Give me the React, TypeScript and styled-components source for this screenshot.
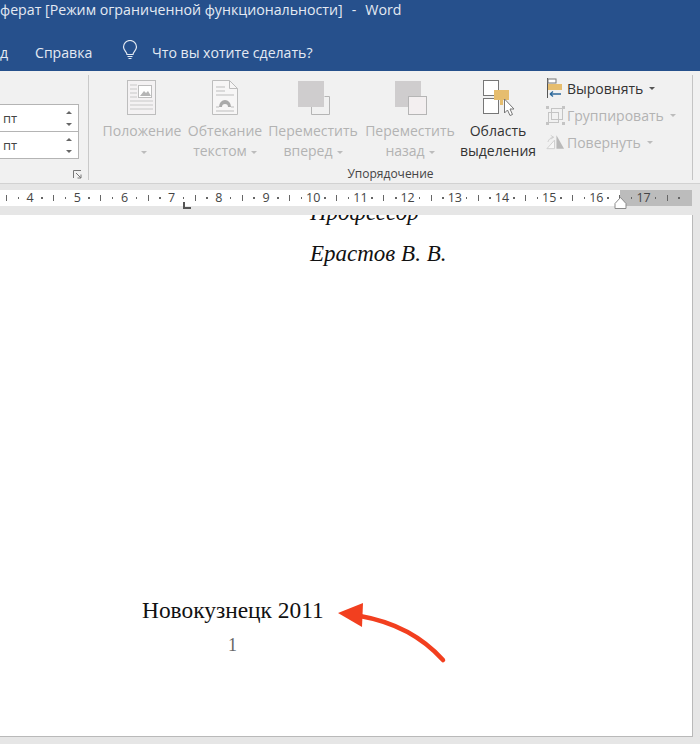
import React from 'react';
import styled, { createGlobalStyle } from 'styled-components';

const UI_FONT = `'Open Sans', 'Noto Sans', sans-serif`;

const GlobalStyle = createGlobalStyle`
  html, body {
    margin: 0;
    padding: 0;
    background: #e6e6e6;
  }
  body {
    width: 700px;
    height: 744px;
    overflow: hidden;
  }
`;

const Window = styled.div`
  width: 700px;
  height: 744px;
  display: flex;
  flex-direction: column;
  font-family: ${UI_FONT};
  overflow: hidden;
`;

const TitleBar = styled.header`
  height: 71px;
  flex: 0 0 auto;
  background: #26508c;
  color: #e4eaf3;
  display: flex;
  flex-direction: column;
`;

const TitleText = styled.div`
  height: 20px;
  line-height: 20px;
  font-size: 14.2px;
  white-space: nowrap;
`;

const TitleDash = styled.span`
  margin: 0 9px;
`;

const MenuRow = styled.nav`
  margin-top: 21px;
  height: 22px;
  display: flex;
  align-items: center;
  font-size: 14.1px;
  white-space: nowrap;
`;

const MenuItem = styled.span<{ $w: number }>`
  width: ${(p) => p.$w}px;
  flex: 0 0 auto;
`;

const Ribbon = styled.section`
  height: 113px;
  flex: 0 0 auto;
  background: #f1f1f1;
  border-bottom: 1px solid #d2d2d2;
  display: flex;
  box-sizing: border-box;
`;

const SizeGroup = styled.div`
  width: 89px;
  flex: 0 0 auto;
  box-sizing: border-box;
  border-right: 1px solid #c9c9c9;
  margin: 4px 0 3px;
  display: flex;
  flex-direction: column;
  padding-top: 30px;
  position: relative;
`;

const Spinner = styled.div`
  width: 79px;
  height: 28px;
  margin-top: -1px;
  box-sizing: border-box;
  background: #fff;
  border: 1px solid #b4b4b4;
  border-left: none;
  display: flex;
  align-items: center;
  justify-content: space-between;
  padding: 0 6px 0 3px;
  font-size: 13px;
  color: #444;
`;

const SpinArrows = styled.div`
  display: flex;
  flex-direction: column;
  gap: 9px;
`;

const SpinArrow = styled.i<{ $down?: boolean }>`
  display: block;
  width: 0;
  height: 0;
  border-left: 3px solid transparent;
  border-right: 3px solid transparent;
  ${(p) => (p.$down ? 'border-top: 3px solid #666;' : 'border-bottom: 3px solid #666;')}
`;

const Launcher = styled.svg`
  position: absolute;
  left: 73px;
  top: 95px;
`;

const ArrangeGroup = styled.div`
  width: 604px;
  flex: 0 0 auto;
  box-sizing: border-box;
  border-right: 1px solid #c4c4c4;
  margin: 4px 0 3px;
  display: flex;
  flex-direction: column;
`;

const ArrangeBody = styled.div`
  flex: 0 0 93px;
  display: flex;
  padding-left: 8px;
`;

const GroupLabel = styled.div`
  text-align: center;
  font-size: 12px;
  line-height: 12px;
  color: #444;
`;

const BigButton = styled.div<{ $w: number; $off?: boolean }>`
  width: ${(p) => p.$w}px;
  flex: 0 0 auto;
  display: flex;
  flex-direction: column;
  align-items: center;
  padding-top: 5px;
  font-size: 14px;
  line-height: 20px;
  color: ${(p) => (p.$off ? '#b3b3b3' : '#333')};
  white-space: nowrap;
`;

const BigIcon = styled.svg`
  display: block;
  margin-bottom: 5px;
`;

const Caret = styled.i<{ $dark?: boolean }>`
  display: inline-block;
  width: 0;
  height: 0;
  margin-left: 4px;
  vertical-align: middle;
  border-left: 3.5px solid transparent;
  border-right: 3.5px solid transparent;
  border-top: 3.5px solid ${(p) => (p.$dark ? '#555' : '#bcbcbc')};
`;

const SmallColumn = styled.div`
  margin-left: 7px;
  padding-top: 2px;
  display: flex;
  flex-direction: column;
  gap: 5px;
`;

const SmallButton = styled.div<{ $off?: boolean }>`
  height: 22px;
  display: flex;
  align-items: center;
  gap: 2px;
  font-size: 14px;
  color: ${(p) => (p.$off ? '#b3b3b3' : '#333')};
  white-space: nowrap;
`;

const RulerBand = styled.div`
  height: 31px;
  flex: 0 0 auto;
  box-sizing: border-box;
  padding-top: 6px;
  background: #e6e6e6;
`;

const Ruler = styled.div`
  width: 692px;
  height: 16px;
  box-sizing: border-box;
  padding-left: 0.6px;
  position: relative;
  display: flex;
  background: linear-gradient(to right, #fff 620px, #bcbcbc 620px);
`;

const RulerCell = styled.div`
  width: 11.81px;
  flex: 0 0 auto;
  display: flex;
  align-items: center;
  justify-content: center;
  font-size: 12.5px;
  line-height: 16px;
  color: #444;
`;

const RulerTick = styled.i`
  display: block;
  width: 1px;
  height: 6px;
  background: #666;
`;

const RulerDot = styled.i`
  display: block;
  width: 1.5px;
  height: 1.5px;
  background: #666;
`;

const TabStop = styled.i`
  position: absolute;
  left: 183px;
  top: 12px;
  width: 6px;
  height: 5px;
  border-left: 2px solid #555;
  border-bottom: 2px solid #555;
`;

const IndentMarker = styled.svg`
  position: absolute;
  left: 614px;
  top: 7px;
`;

const DocArea = styled.main`
  flex: 1;
  min-height: 0;
  display: flex;
  padding: 0 7px 7px 0;
  background: #e6e6e6;
`;

const Page = styled.article`
  flex: 1;
  position: relative;
  overflow: hidden;
  background: #fff;
  border-right: 1px solid #b9b9b9;
  border-bottom: 1px solid #b9b9b9;
  font-family: 'Liberation Serif', 'Times New Roman', serif;
  color: #111;
`;

const SignLine = styled.p<{ $top?: number }>`
  margin: ${(p) => p.$top ?? 0}px 0 0 310px;
  font-size: 23px;
  line-height: 24px;
  font-style: italic;
  white-space: nowrap;
`;

const City = styled.p`
  margin: 332px 0 0 142px;
  font-size: 23.4px;
  line-height: 24px;
  white-space: nowrap;
`;

const PageNumber = styled.div`
  margin: 13px 0 0 228px;
  font-size: 18px;
  line-height: 20px;
  color: #666;
`;

const Arrow = styled.svg`
  position: absolute;
  left: 330px;
  top: 380px;
`;

function PositionIcon() {
  return (
    <BigIcon width="30" height="36" viewBox="0 0 30 36" fill="none">
      <rect x="0.5" y="0.5" width="28" height="34" fill="#f4f2f3" stroke="#bdbdbd" />
      <rect x="11.5" y="5.5" width="13" height="12" fill="#fff" stroke="#bdbdbd" />
      <path d="M13 16l4-5 2 2 2-2 3 5z" fill="#b5b5b5" />
      <path d="M3 5h7M3 9h7M3 13h7M3 17h7M3 21h23M3 25h23M3 29h23" stroke="#c8c8c8" />
    </BigIcon>
  );
}

function WrapIcon() {
  return (
    <BigIcon width="30" height="36" viewBox="0 0 30 36" fill="none">
      <path d="M2.5.5h17l8 8v26h-25z" fill="#f7f6f6" stroke="#bdbdbd" />
      <path d="M19.5.5v8h8" stroke="#bdbdbd" />
      <path d="M6 7h9M6 11h9M6 15h18M6 31h18" stroke="#bdbdbd" />
      <path d="M6 27h3M21 27h3" stroke="#bdbdbd" />
      <path d="M9 27a6 7 0 0 1 12 0h-3a3 3 0 0 0-6 0z" fill="#a9a9a9" />
    </BigIcon>
  );
}

function StackIcon({ front }: { front: boolean }) {
  return (
    <BigIcon width="33" height="36" viewBox="0 0 33 36" fill="none">
      <rect x="1" y="1" width="26" height="26" fill="#cfcdce" />
      {front ? (
        <path d="M27.5 16.5h5v18h-18v-7.5" stroke="#b5b5b5" />
      ) : (
        <rect x="14.5" y="16.5" width="18" height="18" fill="#f3eff0" stroke="#b5b5b5" />
      )}
    </BigIcon>
  );
}

function SelectionIcon() {
  return (
    <BigIcon width="34" height="36" viewBox="0 0 34 36" fill="none">
      <rect x="2.5" y="0.5" width="15" height="15" fill="#fff" stroke="#777" />
      <rect x="2.5" y="18.5" width="15" height="15" fill="#fff" stroke="#777" />
      <rect x="13" y="10" width="15" height="10" fill="#e6bd6e" />
      <rect x="19" y="20" width="3" height="5" fill="#e6bd6e" />
      <path d="M23.5 19v14l3-3 2.5 5.5 2.5-1-2.5-5.5h4z" fill="#fff" stroke="#777" />
    </BigIcon>
  );
}

function AlignIcon() {
  return (
    <svg width="19" height="20" viewBox="0 0 19 20" fill="none">
      <path d="M1.5 0v20" stroke="#555" />
      <rect x="2" y="1" width="8" height="4" fill="#fff" stroke="#777" />
      <rect x="2" y="6" width="14" height="6" fill="#e6bd6e" />
      <path d="M4 16h11M4 16l3-2.5M4 16l3 2.5" stroke="#2f6a9c" strokeWidth="1.4" />
    </svg>
  );
}

function GroupIcon() {
  return (
    <svg width="19" height="19" viewBox="0 0 19 19" fill="none" stroke="#c4c4c4">
      <rect x="5.5" y="2.5" width="11" height="11" />
      <rect x="2.5" y="6.5" width="10" height="10" />
      <path d="M0 0h3v3H0zM16 0h3v3h-3zM0 16h3v3H0zM16 16h3v3h-3z" fill="#c4c4c4" stroke="none" />
    </svg>
  );
}

function RotateIcon() {
  return (
    <svg width="19" height="16" viewBox="0 0 20 16" fill="none">
      <path d="M1 15L9 6v9z" stroke="#cfcfcf" fill="#f8f8f8" />
      <path d="M11 15V1l8 14z" fill="#b9b9b9" />
      <path d="M2 8c1-3 3-5 6-5M8 3L5 1M8 3L5 5" stroke="#cfcfcf" />
    </svg>
  );
}

function BulbIcon() {
  return (
    <svg width="16" height="20" viewBox="0 0 16 20" fill="none" stroke="#e4eaf3" strokeWidth="1.2">
      <path d="M5 14.5c0-2.5-3.5-4-3.5-7.5a6.5 6.5 0 0 1 13 0c0 3.500-3.500 5-3.500 7.500z" />
      <path d="M5.500 16.500h5M6.500 18.500h3" />
    </svg>
  );
}

// the ruler repeats tick, dot, number, dot every quarter of a centimetre
function rulerMarks() {
  const marks: React.ReactNode[] = [];
  for (let n = 4; n <= 17; n++) {
    marks.push(<RulerCell key={`t${n}`}><RulerTick /></RulerCell>);
    marks.push(<RulerCell key={`a${n}`}><RulerDot /></RulerCell>);
    marks.push(<RulerCell key={`n${n}`}>{n}</RulerCell>);
    marks.push(<RulerCell key={`b${n}`}><RulerDot /></RulerCell>);
  }
  marks.push(<RulerCell key="t18"><RulerTick /></RulerCell>);
  marks.push(<RulerCell key="a18"><RulerDot /></RulerCell>);
  return marks;
}

const App: React.FC = () => {
  return (
    <Window>
      <GlobalStyle />
      <TitleBar>
        <TitleText>ферат [Режим ограниченной функциональности]<TitleDash>-</TitleDash>Word</TitleText>
        <MenuRow>
          <MenuItem $w={35}>д</MenuItem>
          <MenuItem $w={87}>Справка</MenuItem>
          <MenuItem $w={30}><BulbIcon /></MenuItem>
          <MenuItem $w={170}>Что вы хотите сделать?</MenuItem>
        </MenuRow>
      </TitleBar>

      <Ribbon>
        <SizeGroup>
          <Spinner>
            пт
            <SpinArrows><SpinArrow /><SpinArrow $down /></SpinArrows>
          </Spinner>
          <Spinner>
            пт
            <SpinArrows><SpinArrow /><SpinArrow $down /></SpinArrows>
          </Spinner>
          <Launcher width="10" height="10" viewBox="0 0 10 10" fill="none" stroke="#777">
            <path d="M.5 8V.5H8" />
            <path d="M3 3l5 5M8 4.500V8H4.500" />
          </Launcher>
        </SizeGroup>

        <ArrangeGroup>
          <ArrangeBody>
            <BigButton $w={90} $off>
              <PositionIcon />
              <span>Положение</span>
              <span><Caret /></span>
            </BigButton>
            <BigButton $w={76} $off>
              <WrapIcon />
              <span>Обтекание</span>
              <span>текстом<Caret /></span>
            </BigButton>
            <BigButton $w={100} $off>
              <StackIcon front />
              <span>Переместить</span>
              <span>вперед<Caret /></span>
            </BigButton>
            <BigButton $w={94} $off>
              <StackIcon front={false} />
              <span>Переместить</span>
              <span>назад<Caret /></span>
            </BigButton>
            <BigButton $w={82}>
              <SelectionIcon />
              <span>Область</span>
              <span>выделения</span>
            </BigButton>
            <SmallColumn>
              <SmallButton><AlignIcon />Выровнять<Caret $dark /></SmallButton>
              <SmallButton $off><GroupIcon />Группировать<Caret /></SmallButton>
              <SmallButton $off><RotateIcon />Повернуть<Caret /></SmallButton>
            </SmallColumn>
          </ArrangeBody>
          <GroupLabel>Упорядочение</GroupLabel>
        </ArrangeGroup>
      </Ribbon>

      <RulerBand>
        <Ruler>
          {rulerMarks()}
          <TabStop />
          <IndentMarker width="13" height="12" viewBox="0 0 13 12">
            <path d="M6.500.5l5.500 6v5H1v-5z" fill="#fff" stroke="#8a8a8a" />
          </IndentMarker>
        </Ruler>
      </RulerBand>

      <DocArea>
        <Page>
          <SignLine $top={-14}>Профессор</SignLine>
          <SignLine $top={17}>Ерастов В. В.</SignLine>
          <City>Новокузнецк 2011</City>
          <PageNumber>1</PageNumber>
          <Arrow width="120" height="70" viewBox="0 0 120 70" fill="none">
            <path d="M113 65C95 45 70 28 30 21" stroke="#f23f1f" strokeWidth="4.500" strokeLinecap="round" />
            <path d="M8 18L33 8l-1 24z" fill="#f23f1f" />
          </Arrow>
        </Page>
      </DocArea>
    </Window>
  );
};

export default App;
